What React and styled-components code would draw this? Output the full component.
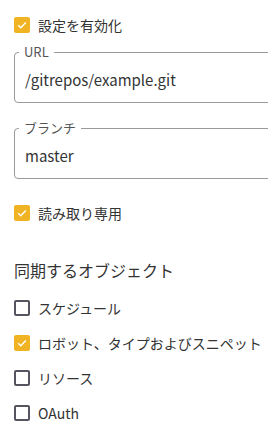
import React from 'react';
import styled, { createGlobalStyle } from 'styled-components';

const GlobalStyle = createGlobalStyle`
  html, body {
    margin: 0;
    padding: 0;
    background: #ffffff;
    overflow: hidden;
  }
  body {
    font-family: "Noto Sans CJK JP", "Noto Sans", sans-serif;
    color: #333333;
  }
`;

const Form = styled.div`
  width: 290px;
  padding: 9px 0 0 14px;
  display: flex;
  flex-direction: column;
`;

const Row = styled.label`
  display: flex;
  align-items: center;
  gap: 8px;
  height: ${(p) => p.h || 32}px;
  margin-top: ${(p) => p.mt || 0}px;
  font-size: 14px;
  color: #333333;
  cursor: pointer;
`;

const Box = styled.span`
  box-sizing: border-box;
  width: 16px;
  height: 16px;
  flex: none;
  border-radius: 2px;
  display: flex;
  align-items: center;
  justify-content: center;
  background: ${(p) => (p.checked ? '#f0b323' : 'transparent')};
  border: ${(p) => (p.checked ? 'none' : '2px solid #55555f')};
`;

const Field = styled.fieldset`
  margin: ${(p) => p.mt || 0}px 0 0 0;
  padding: 0 10px;
  border: 1px solid #9a9a9a;
  border-radius: 4px;
  min-width: 0;
`;

const Legend = styled.legend`
  margin-left: -6px;
  padding: 0 5px;
  font-size: 13px;
  line-height: 14px;
  color: #555555;
`;

const Value = styled.div`
  padding: 11px 0 12px;
  font-size: 15px;
  line-height: 20px;
  color: #333333;
`;

const Heading = styled.div`
  margin-top: 29px;
  margin-bottom: 8px;
  font-size: 16px;
  line-height: 24px;
  color: #333333;
`;

function Checkbox({ checked, label, h, mt }) {
  return (
    <Row h={h} mt={mt}>
      <Box checked={checked}>
        {checked && (
          <svg width="12" height="12" viewBox="0 0 12 12">
            <path d="M2.2 6.3 L4.8 8.8 L9.8 3.4" fill="none" stroke="#ffffff" strokeWidth="1.4" />
          </svg>
        )}
      </Box>
      {label}
    </Row>
  );
}

function TextField({ label, value, mt }) {
  return (
    <Field mt={mt}>
      <Legend>{label}</Legend>
      <Value>{value}</Value>
    </Field>
  );
}

export default function App() {
  return (
    <>
      <GlobalStyle />
      <Form>
        <Checkbox checked label="設定を有効化" />
        <TextField mt={4} label="URL" value="/gitrepos/example.git" />
        <TextField mt={18} label="ブランチ" value="master" />
        <Checkbox checked mt={18} label="読み取り専用" />
        <Heading>同期するオブジェクト</Heading>
        <Checkbox h={35} label="スケジュール" />
        <Checkbox h={35} checked label="ロボット、タイプおよびスニペット" />
        <Checkbox h={35} label="リソース" />
        <Checkbox h={35} label="OAuth" />
      </Form>
    </>
  );
}
